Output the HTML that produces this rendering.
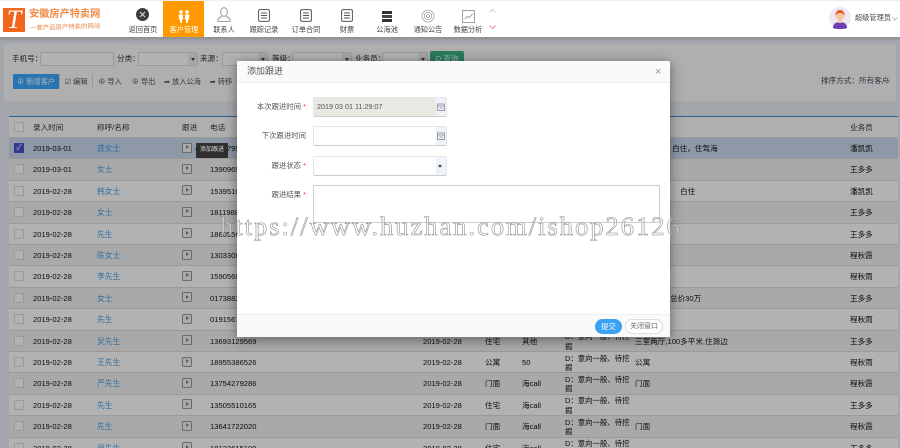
<!DOCTYPE html>
<html lang="zh"><head><meta charset="utf-8"><title>客户管理</title>
<style>
*{box-sizing:border-box}
html,body{margin:0;padding:0;width:900px;height:448px;overflow:hidden;background:#eaeef4;font:7.6px "Liberation Sans","Noto Sans CJK SC",sans-serif;color:#111}
#root{position:relative;width:900px;height:448px;overflow:hidden;filter:blur(.35px)}
.a{position:absolute;white-space:nowrap}
.nav{position:absolute;left:0;top:0;width:900px;height:37px;background:#fff;border-top:1px solid #eee;z-index:5}
.nl{position:absolute;top:23.5px;width:50px;text-align:center;font-size:7.2px;color:#444;line-height:10px}
.ni{position:absolute;top:7px}
.panel{position:absolute;left:4px;top:44px;width:892px;height:57px;background:#fbfbfb;border-radius:2px}
.f{position:absolute;top:52px;height:14px;background:#fff;border:1px solid #ddd;border-radius:2px}
.sel:after{content:"";position:absolute;right:0;top:0;width:9px;height:12px;background:#e8eef8}
.sel:before{content:"";position:absolute;right:2px;top:5px;border:2.5px solid transparent;border-top:3px solid #444;z-index:1}
.lb{position:absolute;top:54px;color:#333;line-height:10px}
.b{position:absolute;top:74px;height:15px;line-height:15px;text-align:center;color:#555;border-right:1px solid #ddd;font-size:7.2px}
.tb{position:absolute;left:9px;top:116px;width:889px;height:332px;background:#fff;border-top:1px solid #3a8fd8}
.r{position:absolute;left:9px;width:889px;height:21.4px;border-bottom:1px solid #ddd;background:#fff}
.r.e{background:#f3f3f3}
.r.s{background:#ccdaee}
.r.h{background:#fbfbfb;height:21px;top:117px;color:#333}
.r span{position:absolute;top:0;line-height:22px;white-space:nowrap}
.r .c{left:5px;top:5px;width:10px;height:10px;border:1px solid #ddd;border-radius:1px;background:#fff}
.r .d{left:24px}.r .n{left:88px;color:#4a9fe6;font-size:7.8px}.r .t{left:201px}
.r .g{left:173px;top:4.5px;width:10px;height:10px;border:1.3px solid #999;border-radius:1.5px;background:#f4f4f4}
.r .g:after{content:"";position:absolute;left:2.5px;top:1.5px;border:2.5px solid transparent;border-left:3.5px solid #888}
.r .d2{left:414px}.r .k{left:476px}.r .o{left:513px}
.r .w{left:556px;width:68px;white-space:normal;line-height:9.4px;top:1.5px;font-size:7.4px}
.r .q{left:626px}.r .u{left:841px}
.ov{position:absolute;left:0;top:37px;width:900px;height:411px;background:rgba(0,0,0,.3);z-index:3}
.navsh{position:absolute;left:0;top:37px;width:900px;height:4px;background:linear-gradient(#8d8f92,#9fa3a8);z-index:4}
.tip{position:absolute;left:196px;top:143px;width:32px;height:15px;background:#2f2f2f;color:#ddd;font-size:6px;line-height:15px;text-align:center;z-index:4;border-radius:1px}
.tip:before{content:"";position:absolute;left:-3px;top:4px;border:2px solid transparent;border-right:2px solid #2f2f2f}
.m{position:absolute;left:237px;top:61px;width:433px;height:276px;background:#fff;border-radius:2px;box-shadow:0 2px 12px rgba(0,0,0,.45);z-index:6}
.mh{position:absolute;left:0;top:0;width:433px;height:22px;background:#fafafa;border-bottom:1px solid #eee;border-radius:2px 2px 0 0;font-size:9px;line-height:20px;padding-left:10px;color:#555}
.mf{position:absolute;left:0;top:253px;width:433px;height:23px;background:#fafafa;border-top:1px solid #eee}
.l{position:absolute;width:69px;left:0;text-align:right;color:#555;font-size:7.4px;line-height:10px}
.l i{color:#e33;font-style:normal}
.in{position:absolute;left:76px;width:134px;height:20px;border:1px solid #e6e6e6;border-bottom:1px solid #ccc;border-radius:2px;background:#fff}
.ad{position:absolute;right:0;top:0;width:10px;height:100%;background:#eef3fb}
.wm{position:absolute;left:220px;top:211px;font:26.5px "Liberation Serif",serif;letter-spacing:2px;color:rgba(255,255,255,.4);-webkit-text-stroke:.6px #8f8f8f;z-index:7;line-height:30px;white-space:nowrap}
</style></head><body><div id="root">

<div class="panel"></div>
<span class="lb" style="left:12px">手机号：</span><div class="f" style="left:40px;width:74px"></div>
<span class="lb" style="left:117px">分类：</span><div class="f sel" style="left:138px;width:60px"></div>
<span class="lb" style="left:200px">来源：</span><div class="f sel" style="left:222px;width:46px"></div>
<span class="lb" style="left:272px">等级：</span><div class="f sel" style="left:292px;width:60px"></div>
<span class="lb" style="left:355px">业务员：</span><div class="f sel" style="left:382px;width:46px"></div>
<div class="a" style="left:430px;top:51px;width:34px;height:15px;background:#3cb482;border-radius:2px;color:#dff;text-align:center;line-height:15px">Q 查询</div>
<div class="b" style="left:13px;width:47px;background:#3aa8ff;color:#fff;border-radius:1px 0 0 1px">⊕ 新增客户</div>
<div class="b" style="left:60px;width:33px">☑ 编辑</div>
<div class="b" style="left:93px;width:34px;border:0">⊕ 导入</div>
<div class="b" style="left:127px;width:33px;border:0">⊕ 导出</div>
<div class="b" style="left:160px;width:45px;border:0">➦ 放入公海</div>
<div class="b" style="left:205px;width:32px;border:0">➦ 转移</div>
<span class="a" style="left:821px;top:76px;color:#444;line-height:10px">排序方式：<span style="color:#456">所有客户</span></span>
<svg class="a" style="left:884px;top:80px" width="6" height="4" viewBox="0 0 6 4" fill="none" stroke="#777" stroke-width=".8"><path d="M.5.5L3 3 5.500.5"/></svg>

<div class="tb"></div>
<div class="r h"><span class="c"></span><span class="d">录入时间</span><span style="left:88px">称呼/名称</span><span style="left:173px">跟进</span><span class="t">电话</span><span class="u">业务员</span></div>

<div class="r s" style="top:138px"><span class="c" style="background:#4a4fd0;border-color:#4a4fd0;color:#fff;line-height:8px;font-size:8px;text-align:center">✓</span><span class="d">2019-03-01</span><span class="n">龚女士</span><span class="g"></span><span class="t">1380795</span><span class="q" style="left:663px">白住，住驾海</span><span class="u">潘凯凯</span></div>
<div class="r e" style="top:159.4px"><span class="c"></span><span class="d">2019-03-01</span><span class="n">女士</span><span class="g"></span><span class="t">13909656</span><span class="u">王多多</span></div>
<div class="r" style="top:180.8px"><span class="c"></span><span class="d">2019-02-28</span><span class="n">韩女士</span><span class="g"></span><span class="t">15395105</span><span class="q" style="left:671px">白住</span><span class="u">潘凯凯</span></div>
<div class="r e" style="top:202.2px"><span class="c"></span><span class="d">2019-02-28</span><span class="n">女士</span><span class="g"></span><span class="t">18119886</span><span class="u">王多多</span></div>
<div class="r" style="top:223.6px"><span class="c"></span><span class="d">2019-02-28</span><span class="n">先生</span><span class="g"></span><span class="t">18605560</span><span class="u">王多多</span></div>
<div class="r e" style="top:245px"><span class="c"></span><span class="d">2019-02-28</span><span class="n">陈女士</span><span class="g"></span><span class="t">13033086</span><span class="u">程秋霞</span></div>
<div class="r" style="top:266.4px"><span class="c"></span><span class="d">2019-02-28</span><span class="n">李先生</span><span class="g"></span><span class="t">15905689</span><span class="u">程秋雨</span></div>
<div class="r e" style="top:287.8px"><span class="c"></span><span class="d">2019-02-28</span><span class="n">女士</span><span class="g"></span><span class="t">01738826</span><span class="q" style="left:661px">总价30万</span><span class="u">王多多</span></div>
<div class="r" style="top:309.2px"><span class="c"></span><span class="d">2019-02-28</span><span class="n">先生</span><span class="g"></span><span class="t">01915675</span><span class="u">程秋雨</span></div>
<div class="r e" style="top:330.6px"><span class="c"></span><span class="d">2019-02-28</span><span class="n">吴先生</span><span class="g"></span><span class="t">13693129569</span><span class="d2">2019-02-28</span><span class="k">住宅</span><span class="o">其他</span><span class="w">D：意向一般、待挖掘</span><span class="q">三室两厅,100多平米,住滁边</span><span class="u">王多多</span></div>
<div class="r" style="top:352px"><span class="c"></span><span class="d">2019-02-28</span><span class="n">王先生</span><span class="g"></span><span class="t">18955386526</span><span class="d2">2019-02-28</span><span class="k">公寓</span><span class="o">50</span><span class="w">D：意向一般、待挖掘</span><span class="q">公寓</span><span class="u">程秋雨</span></div>
<div class="r e" style="top:373.4px"><span class="c"></span><span class="d">2019-02-28</span><span class="n">严先生</span><span class="g"></span><span class="t">13754279286</span><span class="d2">2019-02-28</span><span class="k">门面</span><span class="o">海call</span><span class="w">D：意向一般、待挖掘</span><span class="q">门面</span><span class="u">程秋霞</span></div>
<div class="r" style="top:394.8px"><span class="c"></span><span class="d">2019-02-28</span><span class="n">先生</span><span class="g"></span><span class="t">13505510165</span><span class="d2">2019-02-28</span><span class="k">住宅</span><span class="o">海call</span><span class="w">D：意向一般、待挖掘</span><span class="u">王多多</span></div>
<div class="r e" style="top:416.2px"><span class="c"></span><span class="d">2019-02-28</span><span class="n">先生</span><span class="g"></span><span class="t">13641722020</span><span class="d2">2019-02-28</span><span class="k">门面</span><span class="o">海call</span><span class="w">D：意向一般、待挖掘</span><span class="q">门面</span><span class="u">程秋霞</span></div>
<div class="r" style="top:437.6px"><span class="c"></span><span class="d">2019-02-28</span><span class="n">吴先生</span><span class="g"></span><span class="t">18133615100</span><span class="d2">2019-02-28</span><span class="k">住宅</span><span class="o">海call</span><span class="w">D：意向一般、待挖掘</span><span class="u">王多多</span></div>

<div class="ov"></div>
<div class="navsh"></div>
<div class="tip">添加跟进</div>

<div class="nav">
 <div class="a" style="left:3px;top:7px;width:22px;height:24px;background:#f4661e;color:#fff;font:italic 26px/24px 'Liberation Serif',serif;text-align:center">T</div>
 <div class="a" style="left:29px;top:6.5px;font-size:10.2px;font-weight:bold;color:#ef8a45;line-height:13px">安徽房产特卖网</div>
 <div class="a" style="left:30px;top:23px;font-size:6.4px;color:#e88a4a;line-height:7px;transform:rotate(-2deg)">一套产品房产特卖的网站</div>

 <svg class="ni" style="left:136px;top:7px" width="13" height="13" viewBox="0 0 13 13"><circle cx="6.5" cy="6.5" r="6.5" fill="#3a3d42"/><path d="M4 4l5 5M9 4l-5 5" stroke="#ddd" stroke-width="1.1"/></svg>
 <div class="nl" style="left:118px">返回首页</div>

 <div class="a" style="left:163px;top:0;width:41px;height:36px;background:#ff9900"></div>
 <svg class="ni" style="left:177px;top:9px" width="14" height="13" viewBox="0 0 14 13"><circle cx="4" cy="2" r="1.8" fill="#fff"/><circle cx="10" cy="2" r="1.8" fill="#fff"/><path d="M1.8 4.500h4.200v5H5v3.300H3v-3.300H1.800zM8 4.500h4.200v5H11v3.300H9v-3.300H8z" fill="#fff"/></svg>
 <div class="nl" style="left:159px;color:#fff">客户管理</div>

 <svg class="ni" style="left:217px;top:6px" width="14" height="16" viewBox="0 0 14 16" fill="none" stroke="#888" stroke-width=".8"><ellipse cx="7" cy="5" rx="3.300" ry="4.300"/><path d="M5 9l-4 3v2.500h12V12l-4-3"/></svg>
 <div class="nl" style="left:199px">联系人</div>

 <svg class="ni" style="left:258px;top:8px" width="12" height="13" viewBox="0 0 12 13" fill="none" stroke="#555" stroke-width="1"><rect x=".6" y=".6" width="10.800" height="11.800" rx="1.500"/><path d="M3 4h6M3 6.500h6M3 9h6"/></svg>
 <div class="nl" style="left:239px">跟踪记录</div>

 <svg class="ni" style="left:300px;top:8px" width="12" height="13" viewBox="0 0 12 13" fill="none" stroke="#555" stroke-width="1"><rect x=".6" y=".6" width="10.800" height="11.800" rx="1.500"/><path d="M3 4h6M3 6.500h6M3 9h6"/></svg>
 <div class="nl" style="left:281px">订单合同</div>

 <svg class="ni" style="left:341px;top:8px" width="12" height="13" viewBox="0 0 12 13" fill="none" stroke="#555" stroke-width="1"><rect x=".6" y=".6" width="10.800" height="11.800" rx="1.500"/><path d="M3 4h6M3 6.500h6M3 9h6"/></svg>
 <div class="nl" style="left:322px">财票</div>

 <svg class="ni" style="left:382px;top:10px" width="10" height="11" viewBox="0 0 10 11"><rect width="10" height="3" fill="#333"/><rect y="4" width="10" height="3" fill="#444"/><rect y="8" width="10" height="3" fill="#333"/></svg>
 <div class="nl" style="left:362px">公海池</div>

 <svg class="ni" style="left:421px;top:8px" width="14" height="14" viewBox="0 0 14 14" fill="none" stroke="#888" stroke-width=".6"><circle cx="7" cy="7" r="6"/><circle cx="7" cy="7" r="3.800"/><circle cx="7" cy="7" r="1.500"/></svg>
 <div class="nl" style="left:403px">通知公告</div>

 <svg class="ni" style="left:462px;top:9px" width="13" height="13" viewBox="0 0 13 13" fill="none" stroke="#888" stroke-width=".8"><rect x=".5" y=".5" width="12" height="12"/><path d="M2.500 9l3-2.500 2 1 3-3.500"/></svg>
 <div class="nl" style="left:443px">数据分析</div>

 <svg class="a" style="left:489px;top:8px" width="7" height="4" viewBox="0 0 7 4" fill="none" stroke="#ccc"><path d="M.5 3.500l3-3 3 3"/></svg>
 <svg class="a" style="left:489px;top:24px" width="7" height="4" viewBox="0 0 7 4" fill="none" stroke="#f08a8a"><path d="M.5.500l3 3 3-3"/></svg>

 <svg class="a" style="left:829px;top:6px" width="22" height="22" viewBox="0 0 22 22"><circle cx="11" cy="11" r="11" fill="#efe9f6"/><path d="M4 21c0-5 4-6 7-6s7 1 7 6c-2 1-5 1-7 1s-5 0-7-1z" fill="#6b3fb0"/><rect x="9" y="12" width="4" height="4" fill="#f3c39a"/><ellipse cx="11" cy="9" rx="4" ry="4.600" fill="#f6c9a0"/><path d="M6.500 9c-.5-4 2-6 4.500-6s5 2 4.500 6c-1-2-2-3-4.500-3s-3.500 1-4.500 3z" fill="#f0542a"/></svg>
 <div class="a" style="left:855px;top:12px;font-size:7.2px;color:#444;line-height:10px">超级管理员</div>
 <svg class="a" style="left:892px;top:16px" width="6" height="4" viewBox="0 0 6 4" fill="none" stroke="#aaa" stroke-width=".8"><path d="M.5.500l2.500 2.500 2.500-2.500"/></svg>
</div>

<div class="m">
 <div class="mh">添加跟进</div>
 <div class="a" style="left:418px;top:5px;font-size:11px;color:#999;line-height:12px">×</div>
 <div class="l" style="top:41px">本次跟进时间 <i>*</i></div>
 <div class="in" style="top:36px;background:#e9e8e2;padding-left:3px;line-height:18px;color:#555;font-size:7.2px">2019 03 01 11:29:07<div class="ad"><svg style="position:absolute;left:1px;top:5px" width="8" height="8" viewBox="0 0 8 8" fill="none" stroke="#888" stroke-width=".8"><rect x=".5" y="1" width="7" height="6.500"/><path d="M.5 3h7M2.500 5h3"/></svg></div></div>
 <div class="l" style="top:70px">下次跟进时间</div>
 <div class="in" style="top:65px"><div class="ad"><svg style="position:absolute;left:1px;top:5px" width="8" height="8" viewBox="0 0 8 8" fill="none" stroke="#888" stroke-width=".8"><rect x=".5" y="1" width="7" height="6.500"/><path d="M.5 3h7M2.500 5h3"/></svg></div></div>
 <div class="l" style="top:100px">跟进状态 <i>*</i></div>
 <div class="in" style="top:95px"><div class="ad"><span class="a" style="left:2px;top:8px;border:2.500px solid transparent;border-top:3px solid #444"></span></div></div>
 <div class="l" style="top:129px">跟进结果 <i>*</i></div>
 <div class="in" style="top:124px;width:347px;height:38px;border:1px solid #ccc"></div>
 <div class="mf">
  <div class="a" style="left:358px;top:4px;width:27px;height:15px;background:#3aa2f5;border-radius:8px;color:#fff;text-align:center;line-height:15px;font-size:7.4px">提交</div>
  <div class="a" style="left:388px;top:4px;width:38px;height:15px;background:#fff;border:1px solid #ddd;border-radius:8px;color:#666;text-align:center;line-height:13px;font-size:7px">关闭窗口</div>
 </div>
</div>

<div class="wm">https://www.huzhan.com/ishop26126</div>
</div></body></html>
